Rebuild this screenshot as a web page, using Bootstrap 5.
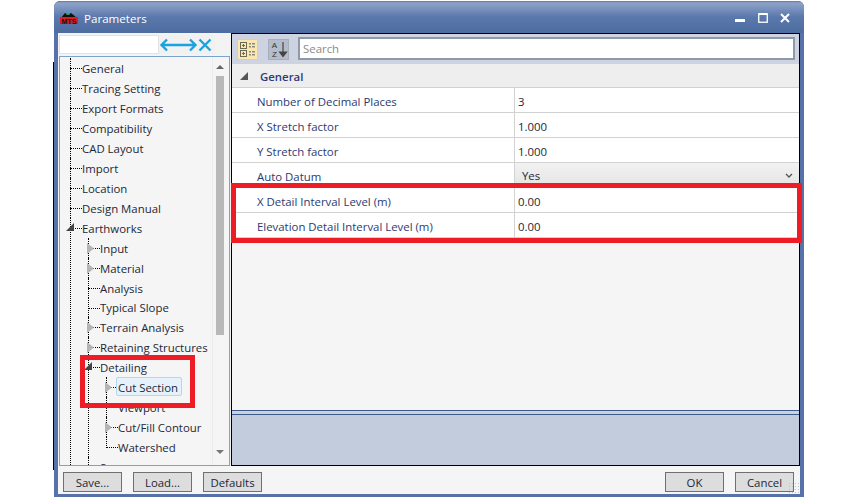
<!DOCTYPE html>
<html lang="en"><head><meta charset="utf-8"><title>Parameters</title>
<link href="https://cdn.jsdelivr.net/npm/bootstrap@5.3.0/dist/css/bootstrap.min.css" rel="stylesheet">
<style>
html,body{height:502px;overflow:hidden;background:#fff}
body{font-family:"Open Sans","Noto Sans",sans-serif;font-size:11.4px;color:#1c2838;line-height:1}
.edge{width:1px;height:408px;margin:62px 0 0 53px;background:#000}
.win{width:750px;height:496px;margin-top:1px;background:#5672a8;border-radius:6px 6px 0 0;padding:0 4px 3px 4px}
.ttl{height:32px;margin:0 -4px;padding:0 9px 0 6px;background:linear-gradient(#5d78ad 0,#8fa3c8 2px,#5a78ac 50%,#4d6c9f 100%);border-radius:6px 6px 0 0;color:#fff;font-size:11.6px}
.ttl-txt{margin-left:6px;margin-top:4px}
.wctl{gap:12px;margin-top:1px;margin-right:5px}
.mainp{height:433px}
.lft{width:173px;background:#f3f3f3}
.fil{height:23px;padding:2px 0 0 1px}
.fil-in{width:100px;height:19px;border:1px solid #e2e2e2;border-radius:0;padding:0;background:#fff}
.fil-ic{width:56px;height:19px;display:block;background:#f1f1f1}
.tpan{width:171px;height:410px;margin-left:1px;border:1px solid #7ba3cc;background:#f5f5f5;overflow:hidden}
.tscroll{flex:1;overflow:hidden;padding-top:1px}
.tbar{width:17px;border-left:1px solid #ececec;padding-right:2px}
.sb-up{width:0;height:0;border:4px solid transparent;border-bottom:4px solid #666;border-top:0;margin-top:8px}
.sb-th{width:8px;height:259px;background:#b8b8b8;margin-top:7px}
.sb-dn{width:0;height:0;border:4px solid transparent;border-top:4px solid #777;border-bottom:0;margin-top:115px}
.tl,.tl ul{list-style:none;margin:0;padding:0}
.tl{margin-left:10px}
.tl ul{margin-left:6px}
.tl li{position:relative;padding-left:12px}
.tl li::before{content:"";position:absolute;left:0;top:10px;width:12px;border-top:1px dotted #000}
.tl li::after{content:"";position:absolute;left:0;top:0;bottom:0;border-left:1px dotted #000}
.lv3>li:last-child::after{bottom:auto;height:11px}
.rw{display:block;height:20px;line-height:22px;white-space:nowrap}
.rw.tight{height:19px;line-height:20px}
.pick{display:block;width:66px;height:19px;line-height:19px;margin:0 0 0 -2px;padding:0 0 0 1px;background:#e6f2fb;border:1px solid #b5d6f2;border-radius:2px;position:relative;z-index:1}
.ex{position:absolute;z-index:1;left:-1px;top:5px;width:7px;height:11px;background:#b4b4b4;clip-path:polygon(0 0,100% 50%,0 100%)}
.ex-open{position:absolute;z-index:1;left:-4px;top:5px;width:8px;height:8px;background:#444;clip-path:polygon(100% 0,100% 100%,0 100%)}
.rgt{width:569px;border:1px solid #000;background:#f5f5f5}
.tbx{height:30px;background:#cdd3e0;padding:3px 4px 0 5px}
.tb1,.tb2{width:21px;height:21px;margin-top:2px;padding:0;display:block}
.tb1{background:#fce7b0;border:1px solid #f3cd78}
.tb2{background:#b6bdca;border:1px solid #a6aebb;margin-left:10px;margin-right:9px}
.srch{flex:1;height:23px;border:2px solid #8f99a9;border-radius:0;padding:0 3px;font:inherit;font-size:11.4px;background:#fff}
.srch::placeholder{color:#8a8a8a;opacity:1}
.gh{height:24px;background:#eee;border-bottom:1px solid #d2d2d2;padding:2px 0 0 8px;color:#2d3a78;font-weight:600}
.gh-ar{width:8px;height:8px;background:#555;clip-path:polygon(100% 0,100% 100%,0 100%);margin-right:12px;margin-top:-1px}
.pr{height:25px;background:#fff;border-bottom:1px solid #d2d2d2}
.pr-k{width:283px;padding:4px 0 0 25px;color:#2b3a72;border-right:1px solid #d2d2d2;height:100%;display:flex;align-items:center}
.pr-v{flex:1;padding:4px 0 0 3px;display:flex;align-items:center;height:100%}
.pr-sel .pr-v{background:linear-gradient(#f2f2f2,#e4e4e4);padding:2px 6px 0 7px;justify-content:space-between}
.pblank{flex:1}
.hlp{height:51px;background:#c2ccdc;border-top:1px solid #3f5a88}
.hlp-l{height:3px;background:#c9d2e0;border-top:1px solid #3f5a88;box-sizing:content-box}
.foot{height:28px;background:#f5f5f5;padding:6px 6px 0 5px;position:relative}
.btnset{gap:11px}
.wbtn{width:59px;height:20px;padding:0;background:#ddd;border:1px solid #707070;border-radius:0;font-size:11.4px;color:#1c2838;line-height:17px}
.wbtn:hover{background:#ddd}
.hl{position:absolute;border:5px solid #ee1c25;pointer-events:none;z-index:5}
.hl-a{left:231px;top:183px;width:571px;height:60px}
.hl-b{left:80px;top:355px;width:115px;height:53px}
.grip{position:absolute;right:1px;bottom:1px;width:11px;height:11px;background-image:radial-gradient(#b9c3d3 1px,transparent 1px);background-size:3px 3px}
</style></head>
<body class="d-flex position-relative">
<div class="edge"></div>
<div class="win d-flex flex-column">
  <div class="ttl d-flex align-items-center justify-content-between">
    <div class="d-flex align-items-center">
      <svg width="18" height="16" viewBox="0 0 18 16"><path d="M1 9 5 4l3 2 3-2 6 5z" fill="#111"/><path d="M4 3l1-2 1 2zM8 4l1-3 1 3zM12 3l2-2v3z" fill="#3fa6e0"/><path d="M6 6l2-2 2 2z" fill="#2f9e4f"/><rect x="0" y="8" width="18" height="7" fill="#d81e28"/><text x="9" y="14.500" font-size="7" font-weight="700" text-anchor="middle" fill="#111" font-family="Liberation Sans">MTS</text></svg>
      <span class="ttl-txt">Parameters</span>
    </div>
    <div class="wctl d-flex align-items-center">
      <svg width="11" height="11" viewBox="0 0 11 11"><rect y="7" width="10" height="3" fill="#fff"/></svg>
      <svg width="10" height="11" viewBox="0 0 10 11"><rect x=".75" y="1.750" width="8.500" height="8.500" fill="none" stroke="#fff" stroke-width="1.300"/><rect x="1" y="1" width="8" height="2" fill="#fff"/></svg>
      <svg width="10" height="10" viewBox="0 0 10 10"><path d="M1 1l8 8M9 1 1 9" stroke="#fff" stroke-width="2"/></svg>
    </div>
  </div>
  <div class="mainp d-flex">
    <div class="lft">
      <div class="fil d-flex">
        <input class="form-control fil-in" type="text" aria-label="Filter">
        <svg class="fil-ic" viewBox="0 0 56 19"><path d="M2 10h35M8 4.500 2.500 10 8 15.500M31 4.500 36.500 10 31 15.500" fill="none" stroke="#1ca3df" stroke-width="2.400"/><path d="M40.500 4.500l11 11M51.500 4.500l-11 11" stroke="#1ca3df" stroke-width="2.400"/></svg>
      </div>
      <div class="tpan d-flex">
        <div class="tscroll">
          <ul class="tl">
            <li><span class="rw">General</span></li>
            <li><span class="rw">Tracing Setting</span></li>
            <li><span class="rw">Export Formats</span></li>
            <li><span class="rw">Compatibility</span></li>
            <li><span class="rw">CAD Layout</span></li>
            <li><span class="rw">Import</span></li>
            <li><span class="rw">Location</span></li>
            <li><span class="rw">Design Manual</span></li>
            <li><i class="ex-open"></i><span class="rw">Earthworks</span>
              <ul>
                <li><i class="ex"></i><span class="rw">Input</span></li>
                <li><i class="ex"></i><span class="rw">Material</span></li>
                <li><span class="rw">Analysis</span></li>
                <li><span class="rw tight">Typical Slope</span></li>
                <li><i class="ex"></i><span class="rw">Terrain Analysis</span></li>
                <li><i class="ex"></i><span class="rw">Retaining Structures</span></li>
                <li><i class="ex-open"></i><span class="rw">Detailing</span>
                  <ul class="lv3">
                    <li><i class="ex"></i><span class="rw"><span class="pick">Cut Section</span></span></li>
                    <li><span class="rw">Viewport</span></li>
                    <li><i class="ex"></i><span class="rw">Cut/Fill Contour</span></li>
                    <li><span class="rw">Watershed</span></li>
                  </ul>
                </li>
                <li><span class="rw">Survey</span></li>
              </ul>
            </li>
          </ul>
        </div>
        <div class="tbar d-flex flex-column align-items-center">
          <div class="sb-up"></div><div class="sb-th"></div><div class="sb-dn"></div>
        </div>
      </div>
    </div>
    <div class="rgt d-flex flex-column">
      <div class="tbx d-flex">
        <svg class="tb1" viewBox="0 0 19 19"><g fill="none" stroke="#6a6a58" stroke-width="1"><rect x="2.500" y="2.500" width="6" height="6"/><rect x="2.500" y="10.500" width="6" height="6"/><path d="M4 5.500h3M5.500 4v3M4 13.500h3M5.500 12v3"/></g><path d="M11 3h2v1.500h-2zM14 3h3v1.500h-3zM11 6h2v1.500h-2zM14 6h3v1.500h-3zM11 11h2v1.500h-2zM14 11h3v1.500h-3zM11 14h2v1.500h-2zM14 14h3v1.500h-3z" fill="#8a8a78"/></svg>
        <svg class="tb2" viewBox="0 0 19 19"><text x="5.500" y="8" font-size="8" text-anchor="middle" fill="#333" font-family="Liberation Sans">A</text><text x="5.500" y="17" font-size="8" text-anchor="middle" fill="#333" font-family="Liberation Sans">Z</text><path d="M14 2v14M10.500 12l3.500 4.500 3.500-4.500z" fill="#444" stroke="#444" stroke-width="1.200"/></svg>
        <input class="form-control srch" type="text" placeholder="Search" aria-label="Search">
      </div>
      <div class="gh d-flex align-items-center"><i class="gh-ar"></i><span>General</span></div>
      <div class="pr d-flex"><div class="pr-k">Number of Decimal Places</div><div class="pr-v">3</div></div>
      <div class="pr d-flex"><div class="pr-k">X Stretch factor</div><div class="pr-v">1.000</div></div>
      <div class="pr d-flex"><div class="pr-k">Y Stretch factor</div><div class="pr-v">1.000</div></div>
      <div class="pr pr-sel d-flex"><div class="pr-k">Auto Datum</div><div class="pr-v"><span>Yes</span><svg width="8" height="6" viewBox="0 0 8 6"><path d="M1 1l3 3 3-3" fill="none" stroke="#555" stroke-width="1.300"/></svg></div></div>
      <div class="pr d-flex"><div class="pr-k">X Detail Interval Level (m)</div><div class="pr-v">0.00</div></div>
      <div class="pr d-flex"><div class="pr-k">Elevation Detail Interval Level (m)</div><div class="pr-v">0.00</div></div>
      <div class="pblank"></div>
      <div class="hlp-l"></div>
      <div class="hlp"></div>
    </div>
  </div>
  <div class="foot d-flex justify-content-between">
    <div class="d-flex btnset"><button class="btn wbtn">Save...</button><button class="btn wbtn">Load...</button><button class="btn wbtn">Defaults</button></div>
    <div class="d-flex btnset"><button class="btn wbtn">OK</button><button class="btn wbtn">Cancel</button></div>
    <div class="grip"></div>
  </div>
</div>
<div class="hl hl-a"></div>
<div class="hl hl-b"></div>
<script src="https://cdn.jsdelivr.net/npm/bootstrap@5.3.0/dist/js/bootstrap.bundle.min.js"></script>
</body></html>
